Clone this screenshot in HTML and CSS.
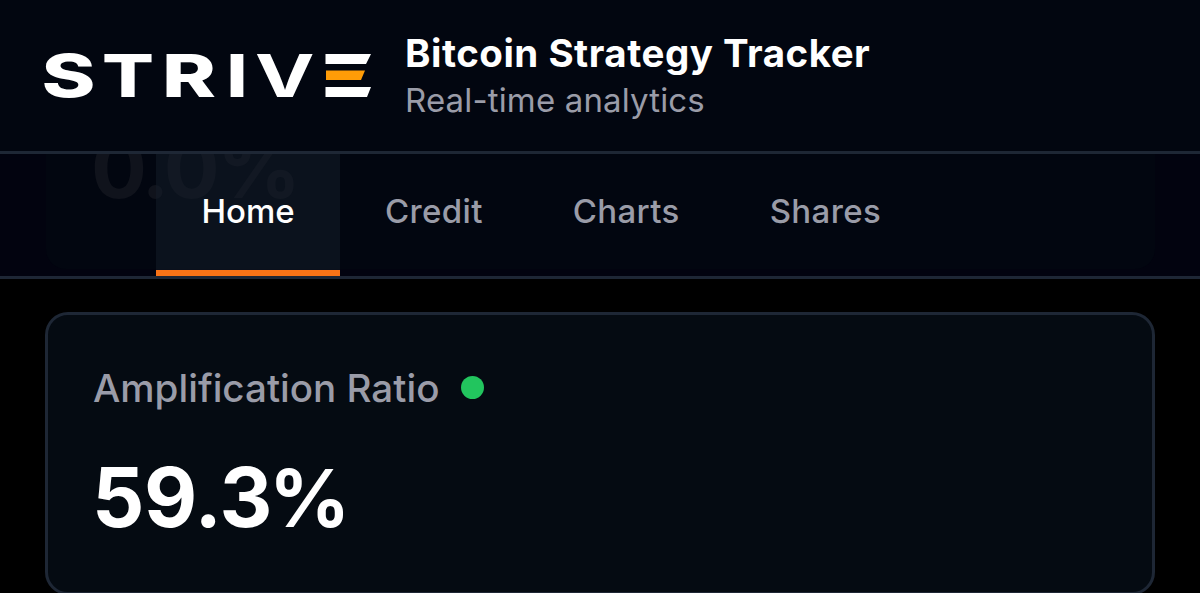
FILE: index.html
```html
<!DOCTYPE html>
<html lang="en">
<head>
<meta charset="utf-8">
<title>Bitcoin Strategy Tracker</title>
<link rel="stylesheet" href="styles.css">
</head>
<body>
<header class="header">
  <svg class="logo" width="328" height="80" viewBox="44 36 328 80" role="img" aria-label="Strive">
    <g class="logo-letters">
      <text x="41.500" y="97" textLength="54" lengthAdjust="spacingAndGlyphs">S</text>
      <text x="102" y="97" textLength="52" lengthAdjust="spacingAndGlyphs">T</text>
      <text x="162" y="97" textLength="54" lengthAdjust="spacingAndGlyphs">R</text>
      <text x="226.500" y="97" textLength="21" lengthAdjust="spacingAndGlyphs">I</text>
      <text class="logo-v" x="255" y="97" textLength="59.500" lengthAdjust="spacingAndGlyphs">V</text>
    </g>
    <path fill="#fff" d="M325.500 54H371l-5 10h-40.500zM325.500 87H371l-4 10h-41.500z"/>
    <path fill="#ff9c07" d="M326 70.500h39l-4 9.500h-35z"/>
  </svg>
  <div class="heading">
    <h1 class="title">Bitcoin Strategy Tracker</h1>
    <p class="subtitle">Real-time analytics</p>
  </div>
</header>
<nav class="nav">
  <div class="ghost-card" aria-hidden="true"><span class="ghost-value">0.0%</span></div>
  <a class="tab tab-active">Home</a>
  <a class="tab">Credit</a>
  <a class="tab">Charts</a>
  <a class="tab">Shares</a>
</nav>
<main class="main">
  <section class="card">
    <div class="card-label"><span class="label">Amplification Ratio</span><span class="dot"></span></div>
    <div class="value">59.3<span class="percent">%</span></div>
  </section>
</main>
</body>
</html>
```
FILE: styles.css
```css
* { box-sizing: border-box; }
body {
  margin: 0;
  height: 593px;
  overflow: hidden;
  background: #000;
  color: #fff;
  font-family: Inter, "Liberation Sans", sans-serif;
}
.header {
  display: flex;
  height: 154px;
  padding: 0 44px;
  gap: 33px;
  background: #020610;
  border-bottom: 3px solid #1e2735;
}
.logo { margin-top: 36px; flex: none; overflow: visible; }
.logo-letters { font-size: 59px; font-weight: 800; fill: #fff; }
.logo-v { font-weight: 700; }
.heading { padding-top: 29px; white-space: nowrap; }
.title {
  margin: 0;
  font-size: 38.5px;
  line-height: 48px;
  font-weight: 700;
  letter-spacing: 0.5px;
}
.subtitle {
  margin: 0;
  padding-top: 1px;
  font-size: 33px;
  line-height: 44px;
  color: #9a9ca8;
  letter-spacing: 0.15px;
}
.nav {
  position: relative;
  display: flex;
  height: 125px;
  padding-left: 156px;
  background: #02030f;
  border-bottom: 3px solid #1e2735;
  overflow: hidden;
}
.ghost-card {
  position: absolute;
  left: 46px;
  top: -60px;
  width: 1109px;
  height: 175px;
  border-radius: 20px;
  background: #020610;
}
.ghost-value {
  position: absolute;
  left: 45px;
  top: 24px;
  font-size: 83px;
  line-height: 100px;
  font-weight: 700;
  letter-spacing: -3px;
  color: #10131c;
}
.tab {
  position: relative;
  padding: 32px 45px 0;
  font-size: 33px;
  line-height: 50px;
  font-weight: 500;
  letter-spacing: 0.35px;
  color: #9a9ca8;
  white-space: nowrap;
}
.tab-active {
  width: 184px;
  padding-left: 45.5px;
  letter-spacing: 0;
  color: #fff;
  background: rgba(19, 29, 41, 0.5);
  border-bottom: 6px solid #f97316;
}
.main { padding: 33px 45px 0; }
.card {
  height: 283px;
  padding: 48px 45px 0;
  border: 3px solid #1e2735;
  border-radius: 23px;
  background: #050b12;
}
.card-label { display: flex; align-items: center; gap: 22px; height: 50px; }
.label {
  font-size: 38.6px;
  line-height: 50px;
  font-weight: 500;
  color: #9a9ca8;
}
.dot { width: 23px; height: 23px; margin-top: -1px; border-radius: 50%; background: #22c55e; }
.value {
  margin: 35px 0 0 -1px;
  font-size: 82px;
  line-height: 100px;
  font-weight: 700;
  letter-spacing: -0.4px;
}
.percent { font-size: 80px; margin-left: -3px; }
```
